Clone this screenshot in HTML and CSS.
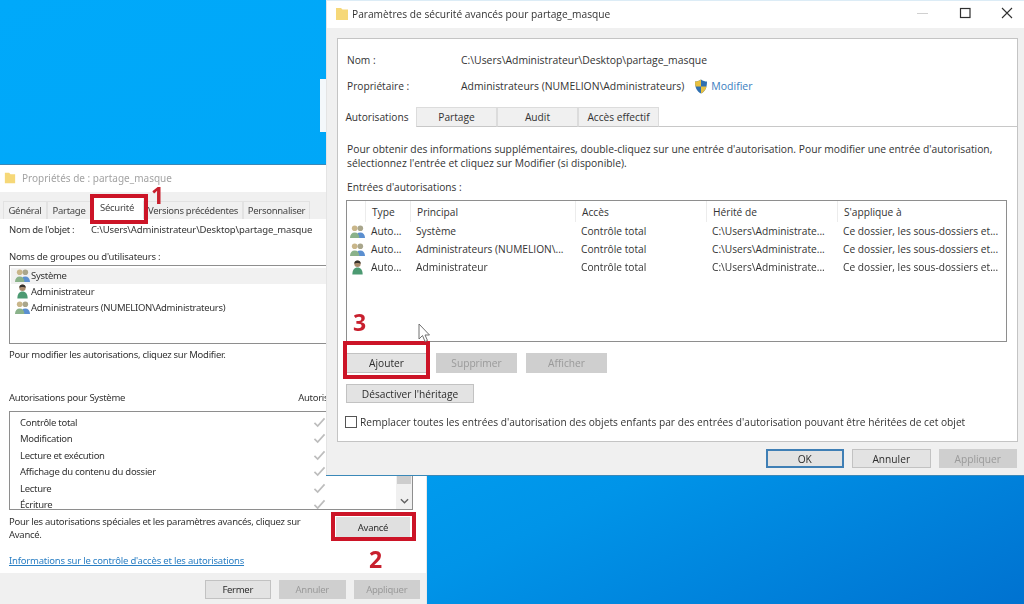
FILE: index.html
```html
<!DOCTYPE html>
<html lang="fr">
<head>
    <meta charset="UTF-8">
    <title>Paramètres de sécurité avancés</title>
    <link rel="stylesheet" href="styles.css">
</head>
<body>
    <svg class="defs" width="0" height="0">
        <symbol id="ico-group" viewBox="0 0 16 16">
            <circle cx="11" cy="4.500" r="3" fill="#a9a68c"/>
            <path d="M6 15c0-4 2-6 5-6s5 2 5 6z" fill="#5b8fd0"/>
            <circle cx="5" cy="4.500" r="3" fill="#c9b68a"/>
            <path d="M0 15c0-4 2-6 5-6s5 2 5 6z" fill="#8ab28a"/>
        </symbol>
        <symbol id="ico-user" viewBox="0 0 16 16">
            <circle cx="8" cy="4" r="3.400" fill="#a98a6c"/>
            <path d="M4.600 4c0-3 1.500-3.600 3.400-3.600S11.400 1 11.400 4C10 2.800 6 2.800 4.600 4z" fill="#35312c"/>
            <path d="M2.500 15.500c0-5 2.200-7.500 5.500-7.500s5.500 2.500 5.500 7.500z" fill="#4c9a72"/>
        </symbol>
        <symbol id="ico-folder" viewBox="0 0 14 14">
            <path d="M1 1h5l1.500 1.500H13V13H1z" fill="#f6d878"/>
        </symbol>
        <symbol id="ico-check" viewBox="0 0 14 12">
            <path d="M1.500 6.500l3.500 3.500 7.500-8.500" fill="none" stroke="#bdbdbd" stroke-width="1.800"/>
        </symbol>
    </svg>

    <div class="desktop-sliver"></div>

    <section class="win win-props">
        <div class="props-title">
            <svg class="props-folder"><use href="#ico-folder"/></svg>
            <span>Propriétés de : partage_masque</span>
        </div>
        <div class="props-tabs">
            <span class="ptab ptab-general">Général</span>
            <span class="ptab ptab-partage">Partage</span>
            <span class="ptab ptab-securite">Sécurité</span>
            <span class="ptab ptab-versions">Versions précédentes</span>
            <span class="ptab ptab-perso">Personnaliser</span>
        </div>
        <div class="props-body">
            <div class="props-name"><span class="props-name-label">Nom de l'objet :</span><span class="props-name-path">C:\Users\Administrateur\Desktop\partage_masque</span></div>
            <div class="props-groups-label">Noms de groupes ou d'utilisateurs :</div>
            <div class="props-groups">
                <div class="props-group is-selected"><svg class="ico-small"><use href="#ico-group"/></svg>Système</div>
                <div class="props-group"><svg class="ico-small"><use href="#ico-user"/></svg>Administrateur</div>
                <div class="props-group"><svg class="ico-small"><use href="#ico-group"/></svg>Administrateurs (NUMELION\Administrateurs)</div>
            </div>
            <div class="props-hint">Pour modifier les autorisations, cliquez sur Modifier.</div>
            <div class="props-perm-head"><span>Autorisations pour Système</span><span class="props-perm-col">Autoriser</span></div>
            <div class="props-perms">
                <div class="props-perm-rows">
                    <div class="props-perm">Contrôle total<svg class="ico-check"><use href="#ico-check"/></svg></div>
                    <div class="props-perm">Modification<svg class="ico-check"><use href="#ico-check"/></svg></div>
                    <div class="props-perm">Lecture et exécution<svg class="ico-check"><use href="#ico-check"/></svg></div>
                    <div class="props-perm">Affichage du contenu du dossier<svg class="ico-check"><use href="#ico-check"/></svg></div>
                    <div class="props-perm">Lecture<svg class="ico-check"><use href="#ico-check"/></svg></div>
                    <div class="props-perm">Écriture<svg class="ico-check"><use href="#ico-check"/></svg></div>
                </div>
                <div class="props-scroll">
                    <div class="props-thumb"></div>
                    <svg class="props-arrow" viewBox="0 0 10 6"><path d="M1 1l4 4 4-4" fill="none" stroke="#606060" stroke-width="1.500"/></svg>
                </div>
            </div>
            <div class="props-adv">
                <div class="props-adv-text">Pour les autorisations spéciales et les paramètres avancés, cliquez sur Avancé.</div>
                <span class="btn btn-avance">Avancé</span>
            </div>
            <a class="props-link">Informations sur le contrôle d'accès et les autorisations</a>
        </div>
        <div class="props-foot">
            <span class="btn btn-props">Fermer</span>
            <span class="btn btn-props is-off">Annuler</span>
            <span class="btn btn-props is-off">Appliquer</span>
        </div>
    </section>

    <section class="win win-adv">
        <div class="adv-title">
            <svg class="adv-folder"><use href="#ico-folder"/></svg>
            <span class="adv-title-text">Paramètres de sécurité avancés pour partage_masque</span>
            <svg class="adv-ctrl" viewBox="0 0 100 17">
                <path d="M3 7.500h11" stroke="#d0d0d0" fill="none"/>
                <rect x="46.500" y="2.500" width="9.500" height="9" fill="none" stroke="#303030" stroke-width="1.200"/>
                <path d="M88 2l10 10M98 2L88 12" stroke="#303030" stroke-width="1.100" fill="none"/>
            </svg>
        </div>
        <div class="adv-panel">
            <div class="adv-head">
                <div class="adv-field"><span class="adv-label">Nom :</span><span class="adv-value">C:\Users\Administrateur\Desktop\partage_masque</span></div>
                <div class="adv-field"><span class="adv-label">Propriétaire :</span><span class="adv-value">Administrateurs (NUMELION\Administrateurs)</span>
                    <svg class="adv-shield" viewBox="0 0 14 15">
                        <path d="M7 .5C5 2 3 2.500 1 2.500 1 9 3 12.500 7 14.500c4-2 6-5.500 6-12-2 0-4-.5-6-2z" fill="#2f6fb0"/>
                        <path d="M7 .5C5 2 3 2.500 1 2.500c0 2 .2 3.500.6 5H7zM7 7.500v7c3-1.500 4.800-4 5.500-7z" fill="#e8c040"/>
                    </svg>
                    <a class="adv-modify">Modifier</a>
                </div>
                <div class="adv-tabs">
                    <span class="atab is-active">Autorisations</span>
                    <span class="atab atab-partage">Partage</span>
                    <span class="atab atab-audit">Audit</span>
                    <span class="atab atab-acces">Accès effectif</span>
                </div>
            </div>
            <div class="adv-content">
                <p class="adv-info">Pour obtenir des informations supplémentaires, double-cliquez sur une entrée d'autorisation. Pour modifier une entrée d'autorisation,<br>sélectionnez l'entrée et cliquez sur Modifier (si disponible).</p>
                <div class="adv-entries-label">Entrées d'autorisations :</div>
                <div class="adv-table">
                    <div class="adv-row adv-row-head">
                        <span></span><span>Type</span><span>Principal</span><span>Accès</span><span>Hérité de</span><span>S'applique à</span>
                    </div>
                    <div class="adv-row">
                        <svg class="ico-table"><use href="#ico-group"/></svg><span>Auto...</span><span>Système</span><span>Contrôle total</span><span>C:\Users\Administrate...</span><span>Ce dossier, les sous-dossiers et...</span>
                    </div>
                    <div class="adv-row">
                        <svg class="ico-table"><use href="#ico-group"/></svg><span>Auto...</span><span>Administrateurs (NUMELION\...</span><span>Contrôle total</span><span>C:\Users\Administrate...</span><span>Ce dossier, les sous-dossiers et...</span>
                    </div>
                    <div class="adv-row">
                        <svg class="ico-table"><use href="#ico-user"/></svg><span>Auto...</span><span>Administrateur</span><span>Contrôle total</span><span>C:\Users\Administrate...</span><span>Ce dossier, les sous-dossiers et...</span>
                    </div>
                </div>
                <div class="adv-actions">
                    <span class="btn btn-adv">Ajouter</span>
                    <span class="btn btn-adv is-off">Supprimer</span>
                    <span class="btn btn-adv is-off">Afficher</span>
                </div>
                <span class="btn btn-inherit">Désactiver l'héritage</span>
                <div class="adv-replace"><span class="adv-checkbox"></span>Remplacer toutes les entrées d'autorisation des objets enfants par des entrées d'autorisation pouvant être héritées de cet objet</div>
            </div>
        </div>
        <div class="adv-foot">
            <span class="btn btn-foot btn-ok">OK</span>
            <span class="btn btn-foot">Annuler</span>
            <span class="btn btn-foot is-off">Appliquer</span>
        </div>
    </section>

    <!-- annotations rouges par dessus la capture -->
    <div class="mark mark-securite"></div>
    <div class="mark mark-avance"></div>
    <div class="mark mark-ajouter"></div>
    <span class="num num-1">1</span>
    <span class="num num-2">2</span>
    <span class="num num-3">3</span>
    <svg class="cursor" viewBox="0 0 12 20">
        <path d="M1 1v15l3.500-3.500L7 18.500l2.500-1-2.500-5.500h4.500z" fill="#fff" stroke="#707070"/>
    </svg>
</body>
</html>
```

FILE: styles.css
```css
* {
    box-sizing: border-box;
}

html, body {
    margin: 0;
    padding: 0;
    height: 100%;
    overflow: hidden;
}

body {
    position: relative;
    background: linear-gradient(155deg, #00a9fa 0%, #00a6f6 45%, #0094e8 72%, #0072d0 100%);
    font-family: "Open Sans", "Noto Sans", sans-serif;
    color: #333;
    filter: blur(0.45px);
}

.defs {
    position: absolute;
}

.desktop-sliver {
    position: absolute;
    left: 320px;
    top: 79px;
    width: 6px;
    height: 53px;
    background: #f4f8fb;
}

.win {
    position: absolute;
    display: flex;
    flex-direction: column;
    overflow: hidden;
}

.btn {
    display: flex;
    align-items: center;
    justify-content: center;
    background: #e3e3e3;
    border: 1px solid #c2c2c2;
    color: #2c2c2c;
}

.btn.is-off {
    background: #cfcfcf;
    border-color: #cfcfcf;
    color: #9a9a9a;
}

/* fenetre Proprietes */
.win-props {
    left: 0;
    top: 165px;
    width: 427px;
    height: 439px;
    background: #fff;
    font-family: "Noto Sans", sans-serif;
    font-size: 9.5px;
    letter-spacing: -0.28px;
    border-right: 1px solid #e8e8e8;
    box-shadow: 0 -1px 0 #3a88b8;
    overflow: visible;
}

.props-title {
    display: flex;
    align-items: center;
    height: 27px;
    padding: 0 0 2px 4px;
    gap: 6px;
    font-size: 10px;
    letter-spacing: 0;
    color: #a3a3a3;
    flex: none;
}

.props-folder {
    width: 12px;
    height: 14px;
}

.props-tabs {
    display: flex;
    align-items: flex-end;
    height: 27px;
    padding: 0 0 0 3px;
    background: #f0f0f0;
    flex: none;
}

.ptab {
    display: flex;
    align-items: center;
    justify-content: center;
    height: 18px;
    background: #f0f0f0;
    border: 1px solid #e2e2e2;
    border-bottom: none;
    color: #444;
}

.ptab-general { width: 44px; }
.ptab-partage { width: 44px; }
.ptab-securite { width: 52px; height: 22px; background: #fff; border: none; padding-bottom: 2px; }
.ptab-versions { width: 100px; }
.ptab-perso { width: 67px; }

.props-body {
    flex: 1;
    padding: 4px 13px 0 9px;
    display: flex;
    flex-direction: column;
}

.props-name {
    display: flex;
    height: 14px;
    line-height: 14px;
    white-space: nowrap;
}

.props-name-label {
    width: 82px;
    flex: none;
}

.props-name-path {
    letter-spacing: -0.13px;
}

.props-groups-label {
    margin-top: 13px;
    line-height: 14px;
    letter-spacing: -0.2px;
}

.props-groups {
    margin-top: 1px;
    height: 79px;
    margin-right: -13px;
    border: 1px solid #8e8e8e;
    padding: 2px 1px;
    flex: none;
}

.props-group {
    display: flex;
    align-items: center;
    gap: 1px;
    height: 15.7px;
    padding-left: 4px;
}

.props-group.is-selected {
    background: #f1f1f1;
}

.ico-small {
    width: 15px;
    height: 15px;
    flex: none;
}

.props-hint {
    margin-top: 4px;
    line-height: 14px;
}

.props-perm-head {
    display: flex;
    justify-content: space-between;
    margin-top: 29px;
    line-height: 14px;
    height: 14px;
}

.props-perm-col {
    margin-right: 76px;
}

.props-perms {
    display: flex;
    margin-top: 6px;
    height: 99px;
    border: 1px solid #8e8e8e;
    overflow: hidden;
    flex: none;
}

.props-perm-rows {
    flex: 1;
    padding: 2px 0 0 10px;
}

.props-perm {
    display: flex;
    align-items: center;
    justify-content: space-between;
    height: 16.5px;
    padding-right: 70px;
}

.ico-check {
    width: 13px;
    height: 11px;
}

.props-scroll {
    display: flex;
    flex-direction: column;
    justify-content: flex-end;
    width: 16px;
    background: #f0f0f0;
    position: relative;
}

.props-thumb {
    background: #cdcdcd;
    position: absolute;
    top: 0;
    left: 1px;
    right: 1px;
    height: 72px;
}

.props-arrow {
    width: 9px;
    height: 6px;
    margin: 0 auto 5px;
}

.props-adv {
    display: flex;
    justify-content: space-between;
    margin-top: 5px;
}

.props-adv-text {
    width: 310px;
    line-height: 13px;
}

.btn-avance {
    width: 74px;
    height: 20px;
    margin: 2px 3px 0 0;
    background: #e0e0e0;
    border-color: #e0e0e0;
}

.props-link {
    margin-top: 13px;
    line-height: 14px;
    color: #2a7fc4;
    letter-spacing: -0.2px;
    text-decoration: underline;
}

.props-foot {
    display: flex;
    justify-content: flex-end;
    gap: 8px;
    height: 31px;
    padding: 7px 6px 0 0;
    background: #f0f0f0;
    flex: none;
}

.btn-props {
    width: 66.5px;
    height: 19px;
}

/* fenetre Parametres de securite avances */
.win-adv {
    left: 326px;
    top: 0;
    width: 698px;
    height: 475px;
    background: #f0f0f0;
    font-size: 10.2px;
    border-top: 1px solid #dcecf6;
    border-left: 1px solid #e4e4e4;
    box-shadow: 0 1px 0 #3a88b8;
    overflow: visible;
}

.adv-title {
    display: flex;
    align-items: center;
    height: 27px;
    background: #fff;
    padding: 0 10px 2px 8px;
    flex: none;
}

.adv-folder {
    width: 14px;
    height: 16px;
    margin-right: 3px;
}

.adv-title-text {
    flex: 1;
    color: #333;
}

.adv-ctrl {
    width: 100px;
    height: 17px;
    margin-top: 2px;
}

.adv-panel {
    margin: 10px 6px 0 10px;
    height: 404px;
    border: 1px solid #c4c4c4;
    background: #fff;
    flex: none;
}

.adv-head {
    display: flex;
    flex-direction: column;
    height: 88px;
    padding-top: 14px;
    border-bottom: 1px solid #c8c8c8;
}

.adv-field {
    display: flex;
    align-items: center;
    height: 14px;
    margin: 0 0 12px 9px;
}

.adv-label {
    width: 114px;
    flex: none;
}

.adv-value {
    font-size: 10.4px;
}

.adv-shield {
    width: 14px;
    height: 15px;
    margin-left: 10px;
}

.adv-modify {
    margin-left: 3px;
    font-size: 10.5px;
    color: #3a7ec0;
}

.adv-tabs {
    display: flex;
    margin-top: auto;
    height: 20px;
    margin-bottom: -1px;
    position: relative;
}

.atab {
    display: flex;
    align-items: center;
    justify-content: center;
    width: 81px;
    background: #f0f0f0;
    border: 1px solid #dcdcdc;
    border-bottom: 1px solid #c8c8c8;
}

.atab.is-active {
    width: 78px;
    background: #fff;
    border-color: #fff;
}

.adv-content {
    padding: 15px 10px 0 8px;
}

.adv-info {
    margin: 0 0 0 1px;
    font-size: 10.3px;
    line-height: 14px;
    white-space: nowrap;
}

.adv-entries-label {
    margin: 10px 0 0 1px;
    line-height: 14px;
}

.adv-table {
    margin: 6px 0 0 0;
    height: 142px;
    border: 1px solid #8e8e8e;
}

.adv-row {
    display: grid;
    grid-template-columns: 18px 45px 165px 131px 131px 1fr;
    align-items: center;
    height: 18px;
    white-space: nowrap;
}

.adv-row span {
    padding-left: 6px;
}

.adv-row-head {
    height: 21px;
}

.adv-row-head span {
    padding-top: 1px;
}

.adv-row-head span + span {
    border-left: 1px solid #ececec;
    line-height: 20px;
}

.ico-table {
    width: 15px;
    height: 15px;
    margin-left: 3px;
}

.adv-actions {
    display: flex;
    gap: 9px;
    margin-top: 11px;
}

.btn-adv {
    width: 81px;
    height: 20px;
}

.btn-inherit {
    width: 128px;
    height: 19px;
    margin-top: 11px;
}

.adv-replace {
    display: flex;
    align-items: center;
    gap: 3px;
    height: 14px;
    margin: 12px 0 0 -1px;
    white-space: nowrap;
}

.adv-checkbox {
    width: 12px;
    height: 12px;
    border: 1px solid #555;
    flex: none;
}

.adv-foot {
    display: flex;
    justify-content: flex-end;
    gap: 8px;
    padding: 7px 7px 0 0;
}

.btn-foot {
    width: 78.5px;
    height: 19px;
}

.btn-ok {
    border: 2px solid #3f7fb5;
}

/* annotations */
.mark {
    position: absolute;
    border: 4px solid #cc1427;
}

.mark-securite {
    left: 90px;
    top: 194px;
    width: 58px;
    height: 30px;
}

.mark-avance {
    left: 331px;
    top: 512px;
    width: 85px;
    height: 29px;
}

.mark-ajouter {
    left: 343px;
    top: 341px;
    width: 87px;
    height: 38px;
}

.num {
    position: absolute;
    font-weight: 700;
    font-size: 23px;
    line-height: 18px;
    color: #c8202e;
}

.num-1 { left: 151px; top: 186px; }
.num-2 { left: 369px; top: 550px; }
.num-3 { left: 353px; top: 313px; }

.cursor {
    position: absolute;
    left: 418px;
    top: 323px;
    width: 12px;
    height: 20px;
}
```
